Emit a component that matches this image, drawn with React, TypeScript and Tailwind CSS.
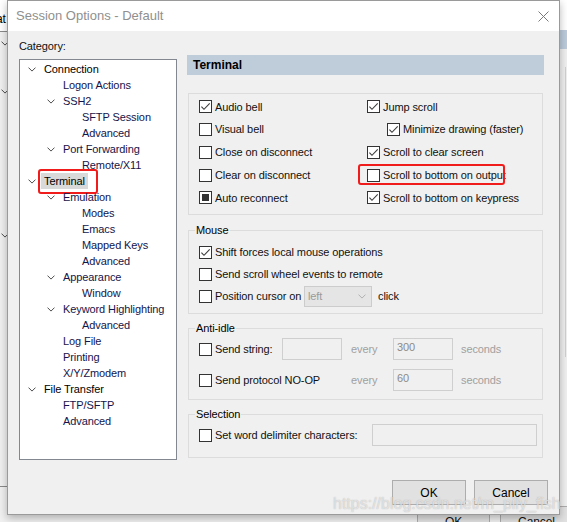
import React from 'react';

type CB = 'on' | 'off' | 'mixed';

function Check({ s }: { s: CB }) {
  return (
    <span className="flex h-[13px] w-[13px] shrink-0 items-center justify-center border border-[#333333] bg-white">
      {s === 'on' && (
        <svg width="11" height="11" viewBox="0 0 11 11" fill="none">
          <path d="M1.4 5.6L4 8.3L9.7 2.3" stroke="#3c3c3c" strokeWidth="1.1" />
        </svg>
      )}
      {s === 'mixed' && <span className="h-[7px] w-[7px] bg-[#333333]" />}
    </span>
  );
}

function Opt({ s, label, className = '' }: { s: CB; label: string; className?: string }) {
  return (
    <div className={`flex items-center gap-[3px] ${className}`}>
      <Check s={s} />
      <span className="whitespace-nowrap">{label}</span>
    </div>
  );
}

function Chevron({ color = '#4d4d4d' }: { color?: string }) {
  return (
    <svg width="8" height="5" viewBox="0 0 8 5" fill="none">
      <path d="M0.5 0.6L4 4.1L7.5 0.6" stroke={color} strokeWidth="1" />
    </svg>
  );
}

type Node = { t: string; l: number; c?: boolean; sel?: boolean };

const tree: Node[] = [
  { t: 'Connection', l: 0, c: true },
  { t: 'Logon Actions', l: 1 },
  { t: 'SSH2', l: 1, c: true },
  { t: 'SFTP Session', l: 2 },
  { t: 'Advanced', l: 2 },
  { t: 'Port Forwarding', l: 1, c: true },
  { t: 'Remote/X11', l: 2 },
  { t: 'Terminal', l: 0, c: true, sel: true },
  { t: 'Emulation', l: 1, c: true },
  { t: 'Modes', l: 2 },
  { t: 'Emacs', l: 2 },
  { t: 'Mapped Keys', l: 2 },
  { t: 'Advanced', l: 2 },
  { t: 'Appearance', l: 1, c: true },
  { t: 'Window', l: 2 },
  { t: 'Keyword Highlighting', l: 1, c: true },
  { t: 'Advanced', l: 2 },
  { t: 'Log File', l: 1 },
  { t: 'Printing', l: 1 },
  { t: 'X/Y/Zmodem', l: 1 },
  { t: 'File Transfer', l: 0, c: true },
  { t: 'FTP/SFTP', l: 1 },
  { t: 'Advanced', l: 1 },
];

const padL = ['pl-[8px]', 'pl-[27px]', 'pl-[46px]'];

function Field({ v, w }: { v?: string; w: string }) {
  return (
    <div className={`h-[22px] ${w} border border-[#cfcfcf] bg-[#f0f0f0] pl-[3px] pt-[1px] leading-[14px] text-[#8a8a8a]`}>
      {v}
    </div>
  );
}

export default function App() {
  return (
    <div className="relative h-[522px] w-[567px] overflow-hidden bg-[#f0f0f0] font-['Liberation_Sans',Arial,sans-serif] text-[11px] tracking-[-0.1px] text-[#111111]">
      {/* background window behind the dialog */}
      <div className="absolute left-0 top-0 h-[31px] w-full bg-white" />
      <div className="absolute left-0 top-[31px] h-px w-[10px] bg-[#8a8a8a]" />
      <div className="absolute left-[550px] top-[30px] h-[19px] w-[17px] bg-[#bccbdb]" />
      <div className="absolute left-[565px] top-[67px] h-[290px] w-px bg-[#d0d0d0]" />
      <div className="absolute left-[-4px] top-[12px] text-[12px] leading-[14px] text-black">at</div>
      <div className="absolute left-[1px] top-[41px]"><Chevron /></div>
      <div className="absolute left-[1px] top-[89px]"><Chevron /></div>
      <div className="absolute left-[1px] top-[233px]"><Chevron /></div>
      <div className="absolute left-0 top-[486px] h-px w-[10px] bg-[#8a8a8a]" />
      <div className="absolute left-[417px] top-[506px] flex h-[26px] w-[73px] items-center justify-center border border-[#adadad] bg-[#e1e1e1] pt-[6px] text-[12px]">OK</div>
      <div className="absolute left-[500px] top-[506px] flex h-[26px] w-[73px] items-center justify-center border border-[#adadad] bg-[#e1e1e1] pt-[6px] text-[12px]">Cancel</div>

      {/* dialog window */}
      <div className="absolute left-[7px] top-0 flex h-[515px] w-[553px] flex-col border border-[#9a9a9a] bg-[#f0f0f0] shadow-[0_3px_8px_rgba(0,0,0,0.28)]">
        {/* title bar */}
        <div className="flex h-[30px] shrink-0 items-center justify-between bg-white pl-[8px] pr-[10px]">
          <span className="text-[13px] tracking-normal text-[#8f8f8f]">Session Options - Default</span>
          <svg width="11" height="11" viewBox="0 0 11 11" fill="none">
            <path d="M0.5 0.5L10.5 10.5M10.5 0.5L0.5 10.5" stroke="#7a7a7a" strokeWidth="1" />
          </svg>
        </div>

        {/* body */}
        <div className="flex items-start pl-[11px] pt-[8px]">
          {/* category column */}
          <div className="flex w-[158px] flex-col">
            <div className="h-[14px] leading-[14px]">Category:</div>
            <div className="mt-[6px] h-[401px] w-[158px] border border-[#828790] bg-white pt-px">
              {tree.map((n, i) => (
                <div key={i} className={`flex h-[16px] items-center ${padL[n.l]}`}>
                  <span className="flex w-[13px] shrink-0 items-center">{n.c && <Chevron />}</span>
                  <span
                    className={`relative h-[16px] whitespace-nowrap px-[3px] leading-[16px] ${
                      n.sel ? 'bg-[#d9d9d9]' : ''
                    } ${n.l === 0 ? 'text-black' : 'text-[#14144a]'}`}
                  >
                    {n.t}
                    {n.sel && (
                      <span className="absolute left-[-3px] top-[-4px] h-[25px] w-[60px] rounded-[3px] border-2 border-[#f01c1c]" />
                    )}
                  </span>
                </div>
              ))}
            </div>
          </div>

          {/* settings column */}
          <div className="ml-[10px] mt-[16px] flex w-[357px] flex-col">
            <div className="flex h-[20px] items-center bg-[#bfcddb] pl-[6px] text-[12px] font-bold tracking-normal text-black">
              Terminal
            </div>

            <div className="ml-px mt-[18px] h-[122px] w-[355px] border border-[#dcdcdc] pl-[10px] pt-[1.4px]">
              <div className="grid grid-cols-[168px_1fr] auto-rows-[22.75px] items-center">
                <Opt s="on" label="Audio bell" />
                <Opt s="on" label="Jump scroll" />
                <Opt s="off" label="Visual bell" />
                <Opt s="on" label="Minimize drawing (faster)" className="pl-[20px]" />
                <Opt s="off" label="Close on disconnect" />
                <Opt s="on" label="Scroll to clear screen" />
                <Opt s="off" label="Clear on disconnect" />
                <div className="relative">
                  <Opt s="off" label="Scroll to bottom on output" />
                  <span className="absolute left-[-9px] top-[-3px] h-[21px] w-[147px] rounded-[3px] border-2 border-[#f01c1c]" />
                </div>
                <Opt s="mixed" label="Auto reconnect" />
                <Opt s="on" label="Scroll to bottom on keypress" />
              </div>
            </div>

            <fieldset className="ml-px mt-[8px] h-[91px] w-[355px] border border-[#dcdcdc] pl-[6px] pt-[4px]">
              <legend className="px-px leading-[14px] text-black">Mouse</legend>
              <div className="flex flex-col pl-[4px]">
                <div className="flex h-[22px] items-center"><Opt s="on" label="Shift forces local mouse operations" /></div>
                <div className="flex h-[22px] items-center"><Opt s="off" label="Send scroll wheel events to remote" /></div>
                <div className="flex h-[22px] items-center">
                  <div className="w-[105px]"><Opt s="off" label="Position cursor on" /></div>
                  <div className="flex h-[21px] w-[68px] items-center justify-between border border-[#cccccc] bg-[#e5e5e5] pl-[3px] pr-[5px] text-[#9a9a9a]">
                    <span>left</span>
                    <Chevron color="#b0b0b0" />
                  </div>
                  <span className="ml-[6px]">click</span>
                </div>
              </div>
            </fieldset>

            <fieldset className="ml-px mt-[7px] h-[79px] w-[355px] border border-[#dcdcdc] pl-[6px] pt-[3px]">
              <legend className="px-px leading-[14px] text-black">Anti-idle</legend>
              <div className="grid grid-cols-[83px_69px_42px_68px_1fr] grid-rows-[22px_22px] gap-y-[9px] pl-[4px] text-[#111111]">
                <div className="flex items-center"><Opt s="off" label="Send string:" /></div>
                <div className="flex items-center"><Field w="w-[60px]" /></div>
                <div className="flex items-center text-[#a0a0a0]">every</div>
                <div className="flex items-center"><Field v="300" w="w-[60px]" /></div>
                <div className="flex items-center text-[#a0a0a0]">seconds</div>
                <div className="col-span-2 flex items-center"><Opt s="off" label="Send protocol NO-OP" /></div>
                <div className="flex items-center text-[#a0a0a0]">every</div>
                <div className="flex items-center"><Field v="60" w="w-[60px]" /></div>
                <div className="flex items-center text-[#a0a0a0]">seconds</div>
              </div>
            </fieldset>

            <fieldset className="ml-px mt-[7px] h-[51px] w-[355px] border border-[#dcdcdc] pl-[6px] pt-[3px]">
              <legend className="px-px leading-[14px] text-black">Selection</legend>
              <div className="flex h-[22px] items-center pl-[4px]">
                <div className="w-[173px]"><Opt s="off" label="Set word delimiter characters:" /></div>
                <Field w="w-[165px]" />
              </div>
            </fieldset>
          </div>
        </div>

        {/* buttons */}
        <div className="mt-[20px] flex justify-end gap-[8px] pr-[11px]">
          <button className="h-[25px] w-[74px] border border-[#adadad] bg-[#e1e1e1] text-[12px] tracking-normal text-black">OK</button>
          <button className="h-[25px] w-[74px] border border-[#adadad] bg-[#e1e1e1] text-[12px] tracking-normal text-black">Cancel</button>
        </div>
      </div>

      {/* watermark */}
      <div className="pointer-events-none absolute left-[333px] top-[494px] whitespace-nowrap text-[16px] leading-[20px] tracking-normal text-white/60 [text-shadow:0_0_1px_rgba(120,120,120,0.6)]">
        https://blog.csdn.net/m_pily_fish
      </div>
    </div>
  );
}
